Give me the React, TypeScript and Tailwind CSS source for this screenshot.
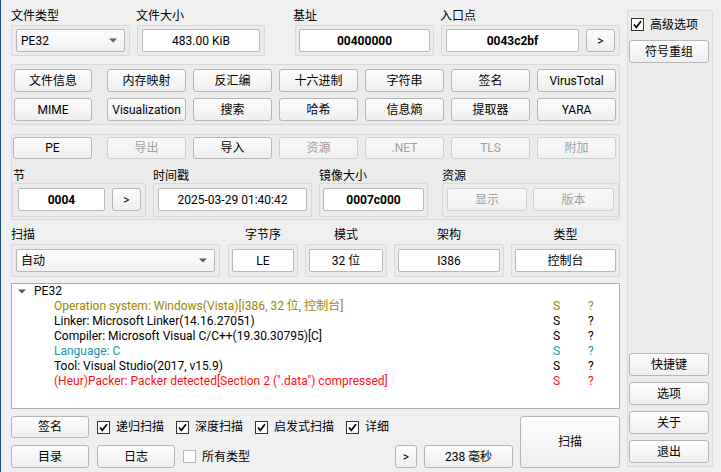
import React from 'react';

type BtnProps = {
  children?: React.ReactNode;
  className?: string;
  disabled?: boolean;
};

const Btn: React.FC<BtnProps> = ({ children, className = '', disabled }) => (
  <div
    className={
      'flex items-center justify-center rounded-[3px] border text-[12px] leading-none select-none ' +
      (disabled
        ? 'border-[#d0d0d0] bg-gradient-to-b from-[#f9f9f9] to-[#f1f1f1] text-[#a0a0a0] '
        : 'border-[#b6b6b6] bg-gradient-to-b from-[#fdfdfd] to-[#efefef] text-black ') +
      className
    }
  >
    {children}
  </div>
);

const Field: React.FC<{ children?: React.ReactNode; className?: string; bold?: boolean }> = ({
  children,
  className = '',
  bold,
}) => (
  <div
    className={
      'flex h-[23px] items-center justify-center rounded-[2px] border border-[#b8b8b8] bg-white text-[12px] leading-none text-black ' +
      (bold ? 'font-bold ' : '') +
      className
    }
  >
    {children}
  </div>
);

const Frame: React.FC<{ children?: React.ReactNode; className?: string }> = ({ children, className = '' }) => (
  <div className={'rounded-[2px] border border-[#d9d9d9] bg-[#ececec] ' + className}>{children}</div>
);

const Label: React.FC<{ children?: React.ReactNode; className?: string }> = ({ children, className = '' }) => (
  <div className={'flex h-[18px] items-center text-[12px] leading-none text-black ' + className}>{children}</div>
);

const Arrow = () => (
  <svg width="8" height="5" viewBox="0 0 8 5" className="shrink-0">
    <path d="M0 0.5 L8 0.5 L4 4.5 Z" fill="#606060" />
  </svg>
);

const Combo: React.FC<{ children?: React.ReactNode; className?: string }> = ({ children, className = '' }) => (
  <div
    className={
      'flex h-[23px] items-center justify-between rounded-[2px] border border-[#b6b6b6] bg-gradient-to-b from-[#fdfdfd] to-[#f1f1f1] pl-[4px] pr-[7px] text-[12px] leading-none text-black ' +
      className
    }
  >
    <span>{children}</span>
    <Arrow />
  </div>
);

const Check: React.FC<{ checked?: boolean; children?: React.ReactNode }> = ({ checked, children }) => (
  <div className="flex items-center gap-[6px] text-[12px] leading-none text-black">
    <div
      className={
        'flex h-[13px] w-[13px] items-center justify-center border bg-white ' +
        (checked ? 'border-[#333333]' : 'border-[#b5b5b5]')
      }
    >
      {checked && (
        <svg width="11" height="11" viewBox="0 0 11 11">
          <path d="M2 5.5 L4.3 8.3 L9 2.2" fill="none" stroke="#000" strokeWidth="1.7" />
        </svg>
      )}
    </div>
    <span>{children}</span>
  </div>
);

const toolRows = [
  ['文件信息', '内存映射', '反汇编', '十六进制', '字符串', '签名', 'VirusTotal'],
  ['MIME', 'Visualization', '搜索', '哈希', '信息熵', '提取器', 'YARA'],
];

const peButtons: { label: string; disabled?: boolean }[] = [
  { label: 'PE' },
  { label: '导出', disabled: true },
  { label: '导入' },
  { label: '资源', disabled: true },
  { label: '.NET', disabled: true },
  { label: 'TLS', disabled: true },
  { label: '附加', disabled: true },
];

const results = [
  { text: 'Operation system: Windows(Vista)[I386, 32 位, 控制台]', color: 'text-[#9a8900]' },
  { text: 'Linker: Microsoft Linker(14.16.27051)', color: 'text-black' },
  { text: 'Compiler: Microsoft Visual C/C++(19.30.30795)[C]', color: 'text-black' },
  { text: 'Language: C', color: 'text-[#1896a8]' },
  { text: 'Tool: Visual Studio(2017, v15.9)', color: 'text-black' },
  { text: '(Heur)Packer: Packer detected[Section 2 (".data") compressed]', color: 'text-[#ff1010]' },
];

export default function App() {
  return (
    <div className="flex h-[472px] w-[721px] items-start overflow-hidden border-l border-[#1c4c7c] bg-[#f0f0f0] pl-[10px] font-['Roboto','Noto_Sans_CJK_SC',sans-serif]">
      {/* main column */}
      <div className="flex w-[609px] flex-col pt-[7px]">
        {/* row 1 */}
        <div className="flex items-start">
          <div className="flex w-[119px] flex-col">
            <Label>文件类型</Label>
            <Frame className="h-[31px] px-[4px] pt-[3px]">
              <Combo>PE32</Combo>
            </Frame>
          </div>
          <div className="ml-[7px] flex w-[128px] flex-col">
            <Label className="-ml-[1px]">文件大小</Label>
            <Frame className="h-[31px] px-[4px] pt-[3px]">
              <Field>483.00 KiB</Field>
            </Frame>
          </div>
          <div className="ml-[30px] flex w-[139px] flex-col">
            <Label className="-ml-[2px]">基址</Label>
            <Frame className="h-[31px] px-[3px] pt-[3px]">
              <Field bold>00400000</Field>
            </Frame>
          </div>
          <div className="ml-[7px] flex flex-1 flex-col">
            <Label className="-ml-[1px]">入口点</Label>
            <Frame className="flex h-[31px] gap-[7px] px-[4px] pt-[3px]">
              <Field bold className="w-[133px]">
                0043c2bf
              </Field>
              <Btn className="h-[23px] w-[29px]">&gt;</Btn>
            </Frame>
          </div>
        </div>

        {/* tool buttons */}
        <Frame className="mt-[8px] flex h-[61px] flex-col gap-[6px] pl-[2px] pt-[4px]">
          {toolRows.map((row, i) => (
            <div key={i} className="grid grid-cols-[86px_repeat(6,79px)] gap-x-[7px]">
              {row.map((t, j) => (
                <Btn key={t} className={'h-[23px] ' + (j === 0 ? 'w-[78px]' : 'w-[79px]')}>
                  {t}
                </Btn>
              ))}
            </div>
          ))}
        </Frame>

        {/* PE group */}
        <Frame className="mt-[9px] flex h-[86px] flex-col pt-[2px]">
          <div className="grid grid-cols-[87px_repeat(6,79px)] gap-x-[7px] pl-[1px]">
            {peButtons.map(b => (
              <Btn key={b.label} disabled={b.disabled} className="h-[22px] w-[79px]">
                {b.label}
              </Btn>
            ))}
          </div>
          <div className="flex items-start">
            <div className="flex w-[134px] flex-col">
              <Label className="h-[24px] items-end pb-[1px] pl-[1px]">节</Label>
              <Frame className="flex h-[34px] gap-[7px] pl-[5px] pt-[4px]">
                <Field bold className="w-[87px]">
                  0004
                </Field>
                <Btn className="h-[23px] w-[29px]">&gt;</Btn>
              </Frame>
            </div>
            <div className="ml-[7px] flex w-[159px] flex-col">
              <Label className="h-[24px] items-end pb-[1px]">时间戳</Label>
              <Frame className="h-[34px] px-[4px] pt-[4px]">
                <Field>2025-03-29 01:40:42</Field>
              </Frame>
            </div>
            <div className="ml-[7px] flex w-[109px] flex-col">
              <Label className="h-[24px] items-end pb-[1px]">镜像大小</Label>
              <Frame className="h-[34px] px-[3px] pt-[4px]">
                <Field bold>0007c000</Field>
              </Frame>
            </div>
            <div className="ml-[14px] flex flex-1 flex-col">
              <Label className="h-[24px] items-end pb-[1px] text-[#a0a0a0]">资源</Label>
              <Frame className="flex h-[34px] gap-[6px] pl-[4px] pt-[4px]">
                <Btn disabled className="h-[23px] w-[80px]">
                  显示
                </Btn>
                <Btn disabled className="h-[23px] w-[81px]">
                  版本
                </Btn>
              </Frame>
            </div>
          </div>
        </Frame>

        {/* row 4 */}
        <div className="mt-[6px] flex items-start">
          <div className="flex w-[209px] flex-col">
            <Label className="h-[17px]">扫描</Label>
            <Frame className="h-[33px] px-[4px] pt-[4px]">
              <Combo>自动</Combo>
            </Frame>
          </div>
          <div className="ml-[8px] flex w-[70px] flex-col">
            <Label className="h-[17px] justify-center">字节序</Label>
            <Frame className="h-[33px] px-[3px] pt-[4px]">
              <Field>LE</Field>
            </Frame>
          </div>
          <div className="ml-[7px] flex w-[82px] flex-col">
            <Label className="h-[17px] justify-center">模式</Label>
            <Frame className="h-[33px] px-[3px] pt-[4px]">
              <Field>32 位</Field>
            </Frame>
          </div>
          <div className="ml-[7px] flex w-[110px] flex-col">
            <Label className="h-[17px] justify-center">架构</Label>
            <Frame className="h-[33px] px-[3px] pt-[4px]">
              <Field className="text-[#4a1f4f]">I386</Field>
            </Frame>
          </div>
          <div className="ml-[7px] flex flex-1 flex-col">
            <Label className="h-[17px] justify-center">类型</Label>
            <Frame className="h-[33px] px-[3px] pt-[4px]">
              <Field>控制台</Field>
            </Frame>
          </div>
        </div>

        {/* results tree */}
        <div className="mt-[6px] h-[126px] border border-[#adadad] bg-white text-[12px] leading-[15px]">
          <div className="flex h-[15px] items-center">
            <div className="ml-[6px] w-[16px]">
              <svg width="8" height="5" viewBox="0 0 8 5">
                <path d="M0 0.5 L8 0.5 L4 4.5 Z" fill="#595959" />
              </svg>
            </div>
            <span className="text-black">PE32</span>
          </div>
          {results.map(r => (
            <div key={r.text} className={'grid h-[15px] grid-cols-[499px_35px_20px] pl-[42px] ' + r.color}>
              <span className="whitespace-nowrap">{r.text}</span>
              <span>S</span>
              <span>?</span>
            </div>
          ))}
        </div>

        {/* bottom */}
        <div className="mt-[7px] flex">
          <div className="flex flex-col gap-[7px]">
            <div className="flex h-[22px] items-center">
              <Btn className="h-[22px] w-[78px]">签名</Btn>
              <div className="ml-[8px] flex items-center gap-[12px]">
                <Check checked>递归扫描</Check>
                <Check checked>深度扫描</Check>
                <Check checked>启发式扫描</Check>
                <Check checked>详细</Check>
              </div>
            </div>
            <div className="flex h-[23px] items-center">
              <Btn className="h-[23px] w-[78px]">目录</Btn>
              <Btn className="ml-[8px] h-[23px] w-[78px]">日志</Btn>
              <div className="ml-[8px] w-[212px]">
                <Check>所有类型</Check>
              </div>
              <Btn className="h-[23px] w-[22px]">&gt;</Btn>
              <Btn className="ml-[7px] h-[23px] w-[89px]">238 毫秒</Btn>
            </div>
          </div>
          <Btn className="ml-[7px] h-[52px] flex-1">扫描</Btn>
        </div>
      </div>

      {/* right panel */}
      <Frame className="ml-[7px] mt-[10px] flex h-[457px] w-[86px] flex-col px-[1px] pt-[7px]">
        <div className="pl-[2px]">
          <Check checked>高级选项</Check>
        </div>
        <Btn className="mt-[9px] h-[23px] w-[80px]">符号重组</Btn>
        <div className="mt-auto flex flex-col gap-[6px] pb-[3px]">
          <Btn className="h-[23px] w-[80px]">快捷键</Btn>
          <Btn className="h-[23px] w-[80px]">选项</Btn>
          <Btn className="h-[23px] w-[80px]">关于</Btn>
          <Btn className="h-[23px] w-[80px]">退出</Btn>
        </div>
      </Frame>
    </div>
  );
}
